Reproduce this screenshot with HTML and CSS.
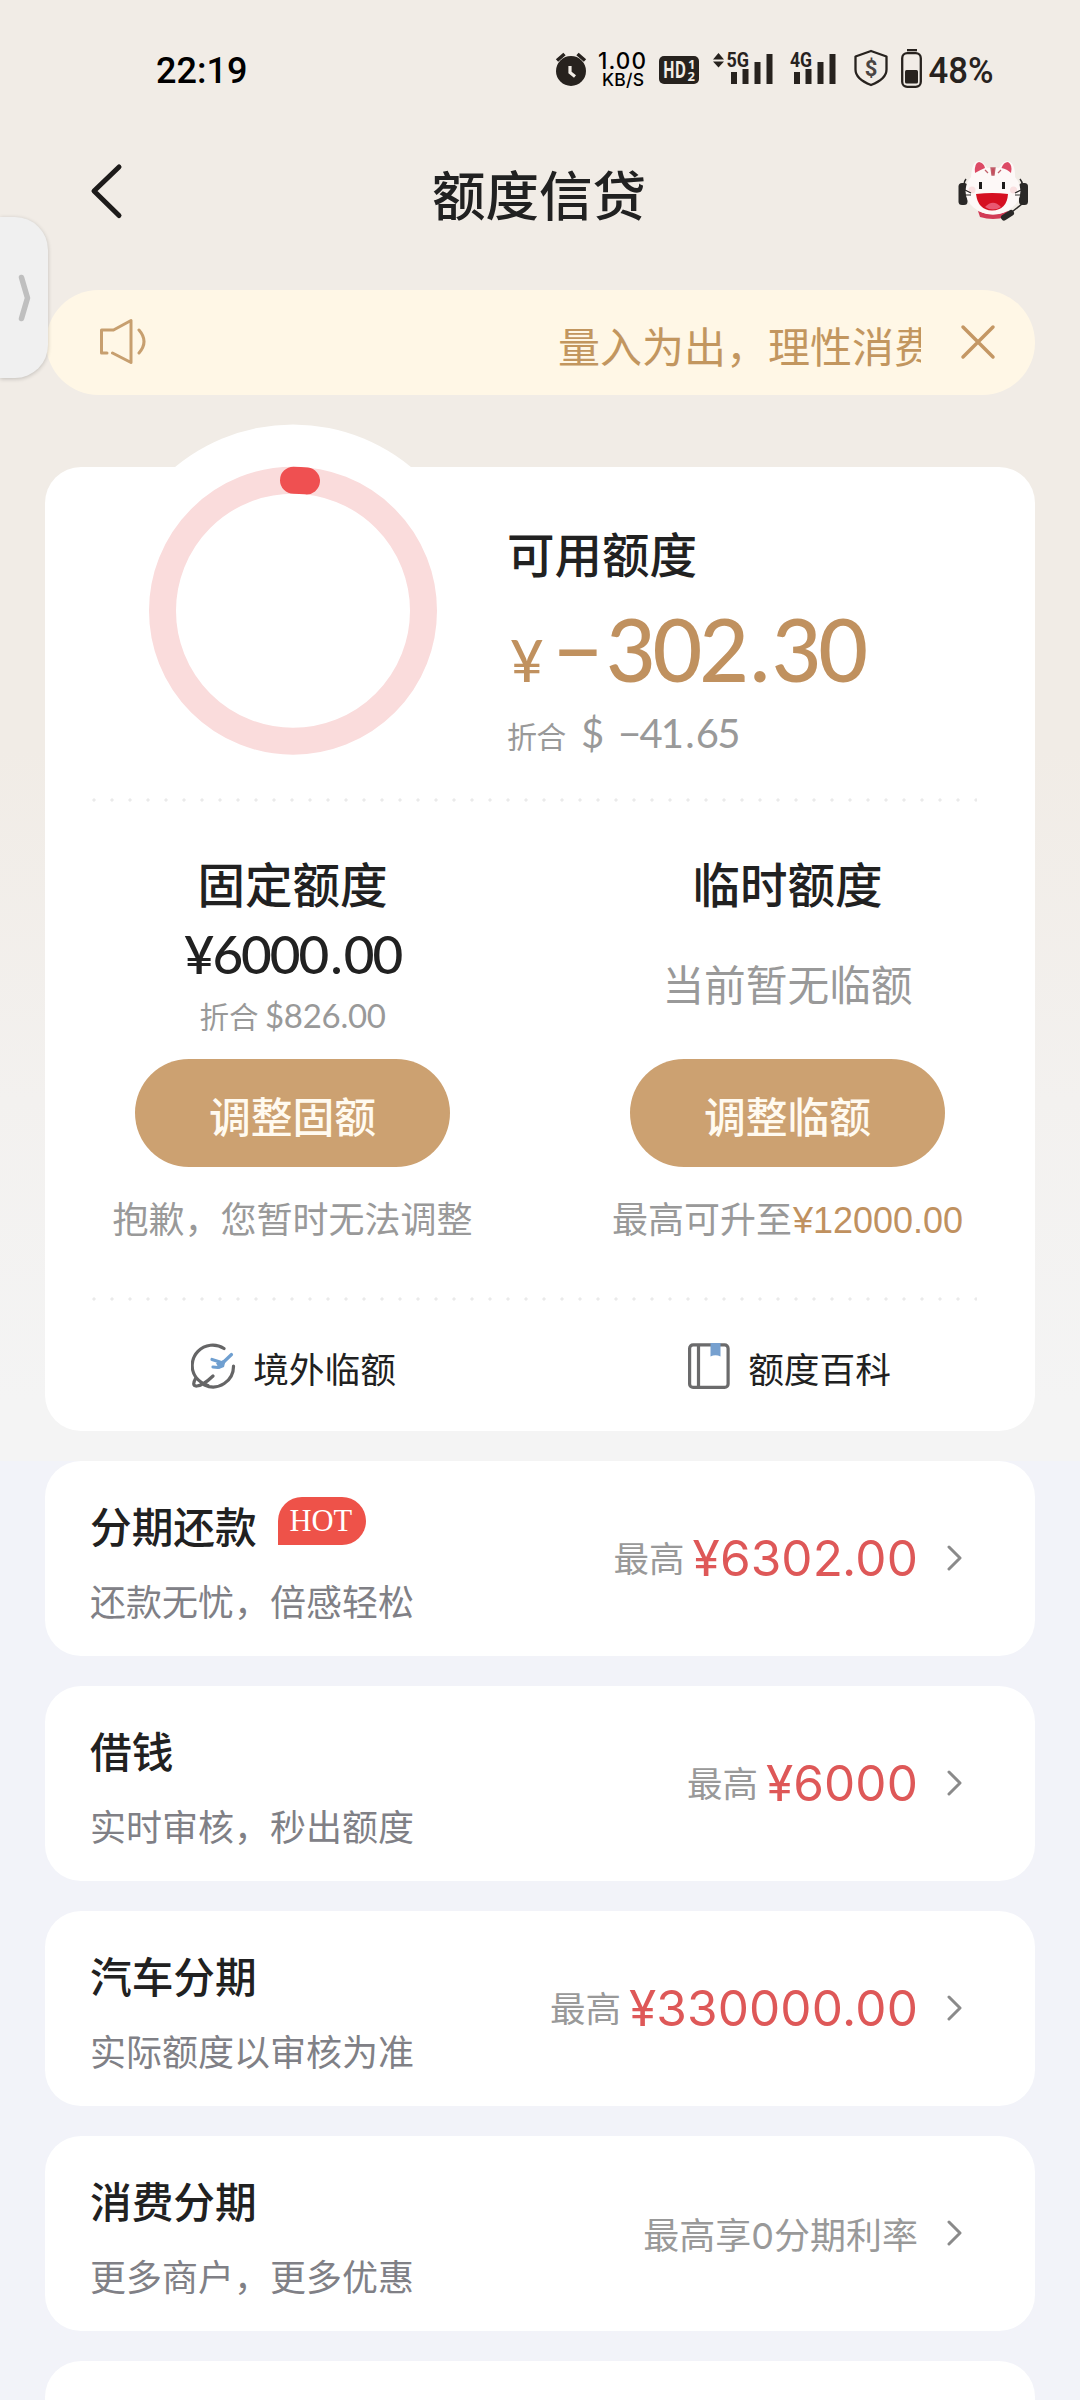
FILE: index.html
```html
<!DOCTYPE html>
<html lang="zh-CN">
<head>
<meta charset="utf-8">
<title>额度信贷</title>
<link rel="stylesheet" href="styles.css">
</head>
<body>
<div class="page">
  <div class="status">
    <span class="clock">22:19</span>
    <svg class="status-icons" width="450" height="60" viewBox="550 40 450 60" fill="#27221e">
      <circle cx="571" cy="71" r="15"/>
      <path d="M557 60.500l7.500-6.500M585 60.500l-7.500-6.500" stroke="#27221e" stroke-width="3.500"/>
      <path d="M570 66v6.500l5 4" fill="none" stroke="#f2ede6" stroke-width="3.200"/>
      <text class="st-speed" x="598" y="69" textLength="48">1.00</text>
      <text class="st-unit" x="602" y="86" textLength="42">KB/S</text>
      <rect x="659" y="56" width="40" height="28" rx="5"/>
      <text class="st-hd" x="663" y="78" textLength="23" lengthAdjust="spacingAndGlyphs">HD</text>
      <text class="st-num" x="688" y="69">1</text>
      <text class="st-num" x="687.500" y="81">2</text>
      <path d="M713 59.500l5.500-6.500 5.500 6.500zM713 61.500l5.500 6 5.500-6z"/>
      <text class="st-net" x="726.500" y="66.500" textLength="22.500" lengthAdjust="spacingAndGlyphs">5G</text>
      <path d="M731 72h6v12h-6zM742.500 69h6v15h-6zM754.500 62h6v22h-6zM766.500 54h6v30h-6z"/>
      <text class="st-net" x="790" y="66.500" textLength="22" lengthAdjust="spacingAndGlyphs">4G</text>
      <path d="M794 72h6v12h-6zM805.500 69h6v15h-6zM817.500 62h6v22h-6zM829.500 54h6v30h-6z"/>
      <path d="M871 51l15.500 5.500v13c0 7-6.500 12-15.500 15.500-9-3.500-15.500-8.500-15.500-15.500v-13z" fill="none" stroke="#27221e" stroke-width="2.300" stroke-linejoin="round"/>
      <text class="st-dollar" x="871" y="76" text-anchor="middle">$</text>
      <rect x="907" y="49" width="10" height="2.300"/>
      <rect x="902.200" y="53.200" width="18.600" height="33.600" rx="5" fill="none" stroke="#27221e" stroke-width="2.300"/>
      <rect x="905" y="70" width="13" height="13.500" rx="1.500"/>
      <text class="st-batt" x="928.500" y="83" textLength="65" lengthAdjust="spacingAndGlyphs">48%</text>
    </svg>
  </div>

  <header class="header">
    <svg class="back" width="40" height="64" viewBox="86 159 40 64" fill="none" stroke="#1d1b1a" stroke-width="5" stroke-linecap="round" stroke-linejoin="round"><path d="M119 167L94 191l25 24.500"/></svg>
    <h1>额度信贷</h1>
    <svg class="service" width="74" height="62" viewBox="956 160 74 62">
      <path d="M966 179q-3 4-1 8M1020 179q4 5 1 9" stroke="#2a2827" stroke-width="1.500" fill="none"/>
      <rect x="958.500" y="183" width="9" height="22" rx="3.500" fill="#2a2827"/>
      <rect x="1019" y="183" width="9" height="22" rx="3.500" fill="#2a2827"/>
      <path d="M978 211q15 7 30 0l-2 6q-13 4-26 0z" fill="#d23b56"/>
      <ellipse cx="993" cy="191" rx="27.500" ry="23.500" fill="#fdf8f7"/>
      <path d="M971 180q0-17 7-19 6 0 10 9zM1015 180q1-17-7-19-6 0-10 9z" fill="#fdf8f7"/>
      <path d="M975 173q-1-10 4-11 5 1 6 6-5 2-10 5zM1001.500 168q2-6 6.500-6 5 3 3 11-4-4-9.500-5z" fill="#dc4a65"/>
      <path d="M991 168h4l-1 7h-2zM985 170l3 3M1001 170l-3 3" fill="#c74a5c" stroke="#c0606b" stroke-width="1.300"/>
      <path d="M980.500 182v7M1003.500 182v7" stroke="#1d1b1a" stroke-width="3"/>
      <circle cx="972" cy="190" r="3.500" fill="#fae0e1"/><circle cx="1013.500" cy="190" r="3.500" fill="#fae0e1"/>
      <path d="M976 194q16.500-2 32 0-1 16-16 16.500-14-.5-16-16.500z" fill="#d50f20"/>
      <path d="M985 207q8-8.500 16 0-8 5-16 0z" fill="#e95872"/>
      <path d="M965 190l6 3M964 195h7M1021 190l-6 3M1022 195h-7" stroke="#2a2827" stroke-width="1.200"/>
      <path d="M1022 204l-14 11" stroke="#2a2827" stroke-width="1.500"/>
      <path d="M1004 217.500l7-4.500" stroke="#2a2827" stroke-width="6" stroke-linecap="round"/>
    </svg>
  </header>

  <aside class="side-tab">
    <svg width="18" height="54" viewBox="0 0 18 54" fill="none" stroke="#bfbfbf" stroke-width="5.500" stroke-linecap="round" stroke-linejoin="round"><path d="M4.500 6.500l6 20.500-6 20.500"/></svg>
  </aside>

  <div class="notice">
    <svg class="horn" width="52" height="50" viewBox="97 318 52 50" fill="none" stroke="#c79f6f" stroke-width="3" stroke-linecap="round" stroke-linejoin="round"><path d="M107 354h-5.500v-23h12l17.500-9.500v42l-18.500-9.500M139 331q10 11.500 0 23"/></svg>
    <div class="marquee"><span>量入为出，理性消费</span></div>
    <svg class="close" width="38" height="38" viewBox="0 0 38 38" fill="none" stroke="#c49764" stroke-width="3.500" stroke-linecap="round"><path d="M4 4l30 30M34 4L4 34"/></svg>
  </div>

  <main>
    <section class="card quota">
      <div class="hero">
        <svg class="ring" width="372" height="372" viewBox="0 0 372 372" fill="none">
          <circle cx="186" cy="185" r="184.500" fill="#fff"/>
          <circle cx="186" cy="186.700" r="130.500" stroke="#fadcdc" stroke-width="27"/>
          <path d="M186.500 56.200a130.500 130.500 0 0 1 13 .7" stroke="#ef5051" stroke-width="27" stroke-linecap="round"/>
        </svg>
        <div class="available">
          <h2>可用额度</h2>
          <p class="balance"><span class="yen">¥</span><span class="minus">−</span><span>302</span><span class="dot">.</span><span>30</span></p>
          <p class="convert"><span class="cjk">折合</span><span class="usd">$</span><span class="fig">−41<i>.</i>65</span></p>
        </div>
      </div>
      <div class="dots"></div>
      <div class="columns">
        <div class="column">
          <h2>固定额度</h2>
          <p class="fixed">¥6000<i>.</i>00</p>
          <p class="fixed-usd">折合 <span>$826<i>.</i>00</span></p>
          <button class="adjust">调整固额</button>
          <p class="hint">抱歉，您暂时无法调整</p>
        </div>
        <div class="column">
          <h2>临时额度</h2>
          <p class="none">当前暂无临额</p>
          <button class="adjust">调整临额</button>
          <p class="hint">最高可升至<span class="max">¥12000.00</span></p>
        </div>
      </div>
      <div class="dots"></div>
      <div class="links">
        <a class="link"><svg width="46" height="46" viewBox="191 1343 46 46" fill="none" stroke="#656566" stroke-width="3.200" stroke-linecap="round"><path d="M224 1348.500a20.500 20.500 0 0 0-28 29M233.500 1366a20.500 20.500 0 0 1-29 19M196 1377.500q-5 9 1 8.500 6-.5 16-10M196 1377.500q5 6 12 8"/><path d="M231.500 1354.500l-11 10.500M212 1359.500l8 2.500M213 1367l5 .5" stroke="#6f9fd0" stroke-width="3.200"/><path d="M216 1363l10-4-2 8-5 2z" fill="#6f9fd0" stroke="none"/></svg><span>境外临额</span></a>
        <a class="link wiki"><svg width="42" height="46" viewBox="0 0 42 46" fill="none" stroke="#6b6b6c" stroke-width="3.200"><rect x="1.600" y="1.900" width="38.500" height="42.500" rx="3.500"/><path d="M10.500 2v42.500"/><path d="M22.500 0h10v13.500q-5-2.500-10 0z" fill="#76a0cf" stroke="none"/></svg><span>额度百科</span></a>
      </div>
    </section>

    <section class="card item">
      <div class="item-text"><h3>分期还款<span class="hot">HOT</span></h3><p>还款无忧，倍感轻松</p></div>
      <p class="value"><span>最高</span><b>¥6302<i>.</i>00</b></p>
      <svg class="go" width="16" height="28" viewBox="0 0 16 28"><path d="M2 3l11 11L2 25"/></svg>
    </section>
    <section class="card item">
      <div class="item-text"><h3>借钱</h3><p>实时审核，秒出额度</p></div>
      <p class="value"><span>最高</span><b>¥6000</b></p>
      <svg class="go" width="16" height="28" viewBox="0 0 16 28"><path d="M2 3l11 11L2 25"/></svg>
    </section>
    <section class="card item">
      <div class="item-text"><h3>汽车分期</h3><p>实际额度以审核为准</p></div>
      <p class="value"><span>最高</span><b>¥330000<i>.</i>00</b></p>
      <svg class="go" width="16" height="28" viewBox="0 0 16 28"><path d="M2 3l11 11L2 25"/></svg>
    </section>
    <section class="card item">
      <div class="item-text"><h3>消费分期</h3><p>更多商户，更多优惠</p></div>
      <p class="value rate"><span>最高享<em>0</em>分期利率</span></p>
      <svg class="go" width="16" height="28" viewBox="0 0 16 28"><path d="M2 3l11 11L2 25"/></svg>
    </section>
    <section class="card item"></section>
  </main>
</div>
</body>
</html>
```

FILE: styles.css
```css
* { box-sizing: border-box; margin: 0; padding: 0; }
html, body { height: 2400px; overflow: hidden; }
body { font-family: "Noto Sans CJK SC", sans-serif; color: #212121; }
h1, h2, h3 { font-weight: 500; }
i, em { font-style: normal; }
svg { display: block; flex: none; }

.page {
  position: relative;
  width: 1080px;
  height: 2400px;
  overflow: hidden;
  background:
    linear-gradient(#f1ece6 0, #f1ece6 750px, #f3f1ef 1100px, #f4f4f4 1400px) 0 0 / 100% 1461px no-repeat,
    #f2f3f9;
}

.status { display: flex; align-items: flex-start; justify-content: space-between; height: 140px; padding: 41px 80px 0 156px; }
.clock { font: 500 36px/60px Roboto, sans-serif; color: #000; }
.status-icons { margin-top: -1px; }
.status-icons text { font-family: Inter, sans-serif; font-weight: 500; }
.status-icons .st-speed { font-size: 22.5px; fill: #000; }
.status-icons .st-unit { font-size: 17.5px; fill: #000; }
.status-icons .st-hd { font: 700 23px "Open Sans", sans-serif; fill: #f2ede6; }
.status-icons .st-num { font: 700 13px "Open Sans", sans-serif; fill: #f2ede6; }
.status-icons .st-net { font: 700 20px Roboto, sans-serif; }
.status-icons .st-dollar { font: 700 22px Roboto, sans-serif; fill: #4a4543; }
.status-icons .st-batt { font: 500 37px Roboto, sans-serif; }

.header { display: flex; align-items: center; justify-content: space-between; height: 102px; padding: 0 50px 0 86px; }
.header h1 { padding: 4px 4px 0 0; font-size: 53.5px; line-height: 60px; }

.side-tab {
  position: absolute; left: 0; top: 217px; z-index: 2;
  display: flex; align-items: center; justify-content: flex-end;
  width: 48px; height: 161px; padding-right: 13px;
  background: #f0f0f0; border-radius: 0 33px 33px 0;
  box-shadow: 0 1px 4px rgba(0, 0, 0, .2);
}

.notice { display: flex; align-items: center; height: 105px; margin: 48px 45px 0 46px; padding: 0 38px 0 51px; border-radius: 53px; background: #fff7e6; }
.marquee { flex: 1; height: 60px; margin: 5px 38px 0 20px; padding-left: 389px; overflow: hidden; white-space: nowrap; font-size: 42px; line-height: 60px; color: #c2965f; }
.horn, .close { margin-top: -1px; }

main { display: flex; flex-direction: column; gap: 30px; padding: 72px 45px 0; }
.card { border-radius: 36px; background: #fff; }
.quota { height: 964px; }
.hero { display: flex; height: 331px; }
.ring { margin: -43px 0 0 62px; }
.available { padding: 56px 0 0 28px; }
.available h2 { font-size: 47.5px; line-height: 60px; }
.balance { display: flex; align-items: baseline; height: 80px; margin-top: 26px; padding-left: 3px; font: 500 86px/80px Lato, sans-serif; letter-spacing: -3.3px; color: #c0915f; }
.balance .yen { width: 43px; font-size: 58px; letter-spacing: 0; }
.balance .minus { width: 53px; }
.balance .dot { width: 26px; padding-left: 4px; }
.convert { display: flex; align-items: baseline; height: 40px; margin-top: 24px; font: 400 40px/40px Lato, sans-serif; letter-spacing: -1.8px; color: #999; }
.convert .cjk { width: 74px; font-family: "Noto Sans CJK SC", sans-serif; font-size: 30px; letter-spacing: -0.8px; }
.convert .usd { width: 37px; }
.convert i { padding: 0 3px; }

.dots { height: 4px; margin-left: 47px; width: 885px; background: radial-gradient(circle at 2px 2px, #eaeaea 1.2px, transparent 2px) 0 0 / 18px 4px repeat-x; }

.columns { display: grid; grid-template-columns: 1fr 1fr; height: 495px; }
.column { display: flex; flex-direction: column; align-items: center; padding-top: 51px; }
.column h2 { font-size: 47.5px; line-height: 60px; }
.fixed { margin-top: 18px; font: 500 53px/46px Lato, sans-serif; letter-spacing: -2px; color: #212121; }
.fixed i { padding: 0 3px; }
.fixed-usd { margin-top: 20px; height: 36px; font-size: 29.5px; line-height: 36px; color: #999; }
.fixed-usd span { font-family: Lato, sans-serif; font-size: 33px; letter-spacing: -0.3px; }
.none { margin: 40px 0 46px; font-size: 41.7px; line-height: 60px; color: #999; }
.adjust { width: 315px; height: 108px; padding-top: 3px; border: 0; border-radius: 54px; background: #cca171; font: 500 41.8px/60px "Noto Sans CJK SC", sans-serif; color: #fffaf0; }
.fixed-usd + .adjust { margin-top: 26px; }
.hint { margin-top: 30px; font-size: 36px; line-height: 40px; color: #999; }
.hint .max { margin-left: 1px; font-family: "Liberation Sans", sans-serif; color: #c0915f; }

.links { display: grid; grid-template-columns: 1fr 1fr; height: 130px; }
.link { display: flex; align-items: center; justify-content: center; gap: 16px; padding-left: 2px; font-size: 35.7px; line-height: 50px; }
.link span { padding-top: 4px; }
.link.wiki { gap: 18px; padding-left: 4px; }

.item { display: flex; align-items: flex-start; flex: none; height: 195px; padding: 0 72px 0 45px; }
.item-text { flex: 1; padding-top: 34px; }
.item h3 { display: flex; font-size: 41.7px; line-height: 60px; }
.item-text p { margin-top: 20px; font-size: 36px; line-height: 50px; color: #808086; }
.hot { width: 88px; height: 48px; margin: 2px 0 0 21px; padding-right: 2px; border-radius: 24px 24px 24px 0; background: #ee5249; font: 400 30.5px/48px "Liberation Serif", serif; color: #fff; text-align: center; }
.value { display: flex; align-items: center; height: 60px; margin-top: 67px; font-size: 35.5px; line-height: 60px; color: #999; white-space: nowrap; }
.value span { margin-top: -2px; }
.value b { margin-left: 8px; font: 400 49.5px/60px Inter, sans-serif; letter-spacing: 0.1px; color: #de5858; }
.value b i { margin: 0 -1px; }
.rate span { margin-top: 3px; font-size: 36px; }
.rate em { font-family: Inter, sans-serif; }
.go { margin: 83px 0 0 29px; fill: none; stroke: #8a8a8a; stroke-width: 3; stroke-linecap: round; stroke-linejoin: round; }
```
